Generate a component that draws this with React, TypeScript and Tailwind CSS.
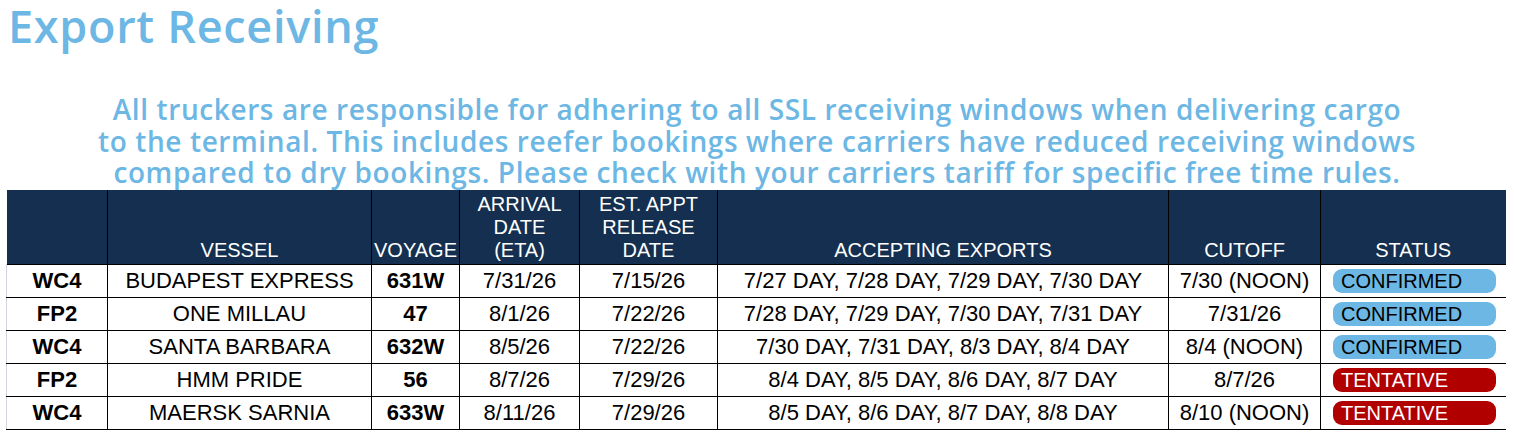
import React from "react";

type Row = {
  service: string;
  vessel: string;
  voyage: string;
  eta: string;
  release: string;
  accepting: string;
  cutoff: string;
  status: "CONFIRMED" | "TENTATIVE";
};

const rows: Row[] = [
  { service: "WC4", vessel: "BUDAPEST EXPRESS", voyage: "631W", eta: "7/31/26", release: "7/15/26", accepting: "7/27 DAY, 7/28 DAY, 7/29 DAY, 7/30 DAY", cutoff: "7/30 (NOON)", status: "CONFIRMED" },
  { service: "FP2", vessel: "ONE MILLAU", voyage: "47", eta: "8/1/26", release: "7/22/26", accepting: "7/28 DAY, 7/29 DAY, 7/30 DAY, 7/31 DAY", cutoff: "7/31/26", status: "CONFIRMED" },
  { service: "WC4", vessel: "SANTA BARBARA", voyage: "632W", eta: "8/5/26", release: "7/22/26", accepting: "7/30 DAY, 7/31 DAY, 8/3 DAY, 8/4 DAY", cutoff: "8/4 (NOON)", status: "CONFIRMED" },
  { service: "FP2", vessel: "HMM PRIDE", voyage: "56", eta: "8/7/26", release: "7/29/26", accepting: "8/4 DAY, 8/5 DAY, 8/6 DAY, 8/7 DAY", cutoff: "8/7/26", status: "TENTATIVE" },
  { service: "WC4", vessel: "MAERSK SARNIA", voyage: "633W", eta: "8/11/26", release: "7/29/26", accepting: "8/5 DAY, 8/6 DAY, 8/7 DAY, 8/8 DAY", cutoff: "8/10 (NOON)", status: "TENTATIVE" },
];

const th = "border-x border-black px-0 pb-[2px] align-bottom text-center font-normal leading-[23px]";
const td = "border border-black px-0 text-center align-middle leading-[26px]";

export default function App() {
  return (
    <div className="h-[441px] w-[1514px] overflow-hidden bg-white">
      <h1 className="pl-2 text-[45px] font-semibold leading-[52px] tracking-[0.7px] text-[#6cb7e4] [font-family:'Open_Sans',sans-serif]">
        Export Receiving
      </h1>
      <p className="mt-[42px] text-center text-[28px] font-semibold leading-[31.5px] tracking-[0.6px] text-[#6cb7e4] [font-family:'Open_Sans',sans-serif]">
        All truckers are responsible for adhering to all SSL receiving windows when delivering cargo
        <br />
        to the terminal. This includes reefer bookings where carriers have reduced receiving windows
        <br />
        compared to dry bookings. Please check with your carriers tariff for specific free time rules.
      </p>

      <table className="ml-[6px] mt-[1px] w-[1499px] table-fixed border-collapse text-black [font-family:'Liberation_Sans',Arial,sans-serif]">
        <colgroup>
          <col className="w-[101px]" />
          <col className="w-[264px]" />
          <col className="w-[88px]" />
          <col className="w-[120px]" />
          <col className="w-[138px]" />
          <col className="w-[451px]" />
          <col className="w-[152px]" />
          <col className="w-[185px]" />
        </colgroup>
        <thead>
          <tr className="h-[75px] bg-[#142f4f] text-[20px] text-white">
            <th className="border-r border-black"></th>
            <th className={th}>VESSEL</th>
            <th className={th}>VOYAGE</th>
            <th className={th}>
              ARRIVAL
              <br />
              DATE
              <br />
              (ETA)
            </th>
            <th className={th}>
              EST. APPT
              <br />
              RELEASE
              <br />
              DATE
            </th>
            <th className={th}>ACCEPTING EXPORTS</th>
            <th className={th}>CUTOFF</th>
            <th className="border-l border-black pb-[2px] align-bottom text-center font-normal leading-[23px]">STATUS</th>
          </tr>
        </thead>
        <tbody className="text-[22px]">
          {rows.map((r, i) => (
            <tr key={i} className="h-[33px]">
              <td className="border border-l-gray-300 border-y-black border-r-black text-center font-bold leading-[26px]">{r.service}</td>
              <td className={td}>{r.vessel}</td>
              <td className={`${td} font-bold`}>{r.voyage}</td>
              <td className={td}>{r.eta}</td>
              <td className={td}>{r.release}</td>
              <td className={td}>{r.accepting}</td>
              <td className={td}>{r.cutoff}</td>
              <td className="border-y border-l border-black pl-[12px] pr-[10px] align-middle">
                <div
                  className={`h-[24px] rounded-[9px] pl-[8px] text-left text-[20px] leading-[24px] ${
                    r.status === "CONFIRMED" ? "bg-[#6cb7e4] text-black" : "bg-[#b00000] text-white"
                  }`}
                >
                  {r.status}
                </div>
              </td>
            </tr>
          ))}
        </tbody>
      </table>
    </div>
  );
}
